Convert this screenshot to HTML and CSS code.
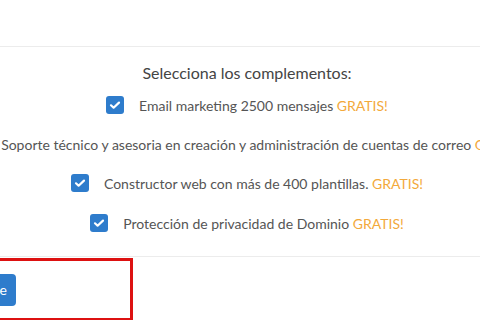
FILE: index.html
```html
<!DOCTYPE html>
<html lang="es">

<head>
    <meta charset="UTF-8">
    <meta name="viewport" content="width=device-width, initial-scale=1.0">
    <title>Complementos</title>
    <link rel="stylesheet" href="styles.css">
</head>

<body>
    <div class="top-space"></div>
    <div class="addons">
        <h3 class="addons-title">Selecciona los complementos:</h3>
        <label class="addon">
            <span class="check"><svg viewBox="0 0 18 18"><path d="M5 9.3l2.6 2.4L13 6.6"/></svg></span>
            <span class="addon-text">Email marketing 2500 mensajes <b class="free">GRATIS!</b></span>
        </label>
        <label class="addon">
            <span class="check"><svg viewBox="0 0 18 18"><path d="M5 9.3l2.6 2.4L13 6.6"/></svg></span>
            <span class="addon-text">Soporte técnico y asesoria en creación y administración de cuentas de correo <b class="free">GRATIS!</b></span>
        </label>
        <label class="addon">
            <span class="check"><svg viewBox="0 0 18 18"><path d="M5 9.3l2.6 2.4L13 6.6"/></svg></span>
            <span class="addon-text">Constructor web con más de 400 plantillas. <b class="free">GRATIS!</b></span>
        </label>
        <label class="addon">
            <span class="check"><svg viewBox="0 0 18 18"><path d="M5 9.3l2.6 2.4L13 6.6"/></svg></span>
            <span class="addon-text">Protección de privacidad de Dominio <b class="free">GRATIS!</b></span>
        </label>
    </div>
    <div class="actions">
        <div class="highlight">
            <button class="btn">Siguiente</button>
        </div>
    </div>
</body>

</html>
```

FILE: styles.css
```css
body {
    font-family: Lato, "Open Sans", sans-serif;
    margin: 0;
    padding: 0;
    background-color: #fff;
    color: #555;
    overflow: hidden;
}

.top-space {
    height: 46px;
    border-bottom: 1px solid #ececec;
}

.addons {
    padding: 14px 0 0 14px;
    height: 195px;
    border-bottom: 1px solid #ececec;
}

.addons-title {
    margin: 0;
    text-align: center;
    font-size: 16px;
    font-weight: normal;
    color: #444;
    line-height: 24px;
}

.addon {
    display: flex;
    justify-content: center;
    align-items: center;
    gap: 15px;
    height: 40px;
    font-size: 14px;
    white-space: nowrap;
}

.addon:nth-child(3) {
    height: 38px;
}

.check {
    flex: none;
    width: 18px;
    height: 18px;
    border-radius: 3px;
    background-color: #2e7ccc;
}

.check svg {
    display: block;
    width: 18px;
    height: 18px;
    fill: none;
    stroke: #fff;
    stroke-width: 2.2;
    stroke-linecap: round;
    stroke-linejoin: round;
}

.free {
    font-weight: normal;
    color: #f3a93b;
}

.actions {
    padding-top: 1px;
}

.highlight {
    width: 160px;
    height: 57px;
    margin-left: -33px;
    border: 3px solid #dd1111;
    display: flex;
    align-items: center;
}

.btn {
    margin-left: -62px;
    width: 108px;
    height: 32px;
    padding: 0 9px 0 0;
    background-color: #2e7ccc;
    color: #fff;
    border: none;
    border-radius: 4px;
    font-family: Lato, sans-serif;
    font-size: 14px;
    text-align: right;
}
```
